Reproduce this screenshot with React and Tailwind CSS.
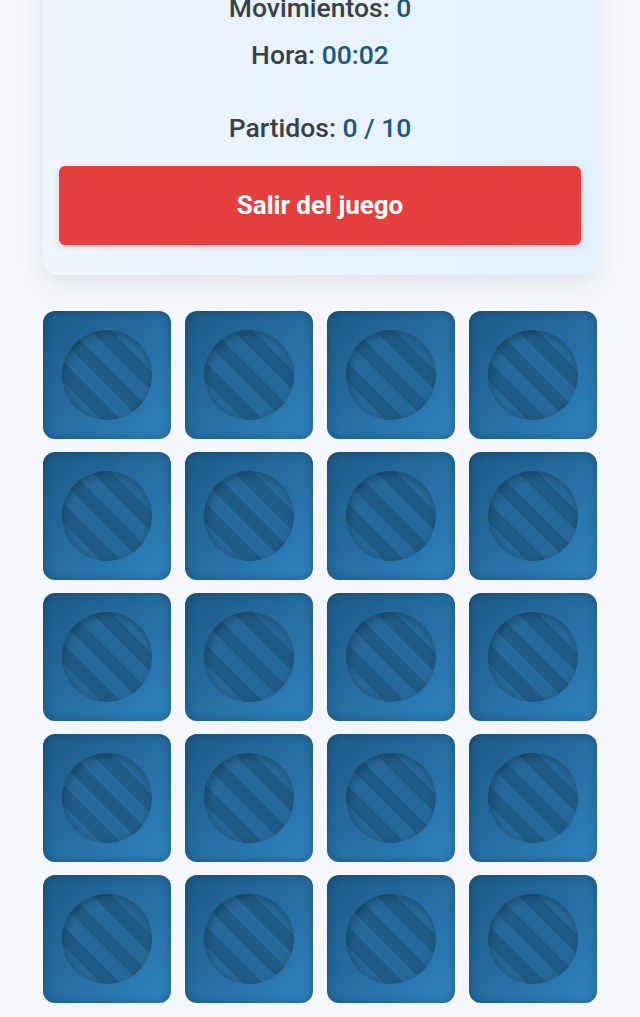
import React from 'react'

const stats = [
  { label: 'Movimientos', value: '0' },
  { label: 'Hora', value: '00:02' },
]

function Tile() {
  return (
    <button className="aspect-square rounded-xl bg-linear-to-br from-[#1d5a87] to-[#2f82bf] shadow-[inset_0_0_10px_rgba(0,0,0,0.28)] flex items-center justify-center">
      <span className="w-[70%] aspect-square rounded-full bg-[repeating-linear-gradient(45deg,#1f5b86_0px_14px,#27699a_14px_28px)] shadow-[inset_2px_3px_8px_rgba(0,0,0,0.28)]" />
    </button>
  )
}

export default function App() {
  return (
    <div className="min-h-screen bg-[#f4f6fa] px-[43px] pb-10 font-['Roboto',sans-serif] overflow-hidden">
      {/* Score panel */}
      <div className="-mt-[40px] pt-[32px] pb-[30px] px-[16px] rounded-2xl bg-linear-to-r from-[#eef5fd] to-[#e3f0fd] shadow-[0_8px_24px_rgba(30,50,80,0.10)]">
        <div className="flex flex-col items-center gap-[15px]">
          {stats.map(s => (
            <p key={s.label} className="text-[26.5px] leading-8 font-medium text-[#3a3f44]">
              {s.label}: <span className="text-[#1d577f]">{s.value}</span>
            </p>
          ))}
        </div>
        <p className="mt-[41px] text-center text-[26.5px] leading-8 font-medium text-[#3a3f44]">
          Partidos: <span className="text-[#1d577f]">0 / 10</span>
        </p>
        <button className="mt-[22px] w-full h-[79px] rounded-md bg-[#e53e3e] text-white text-[26px] font-bold shadow-[0_2px_6px_rgba(229,62,62,0.25)]">
          Salir del juego
        </button>
      </div>

      {/* Board */}
      <div className="mt-[36px] grid grid-cols-4 gap-x-[14px] gap-y-[13px]">
        {Array.from({ length: 20 }).map((_, i) => (
          <Tile key={i} />
        ))}
      </div>
    </div>
  )
}
